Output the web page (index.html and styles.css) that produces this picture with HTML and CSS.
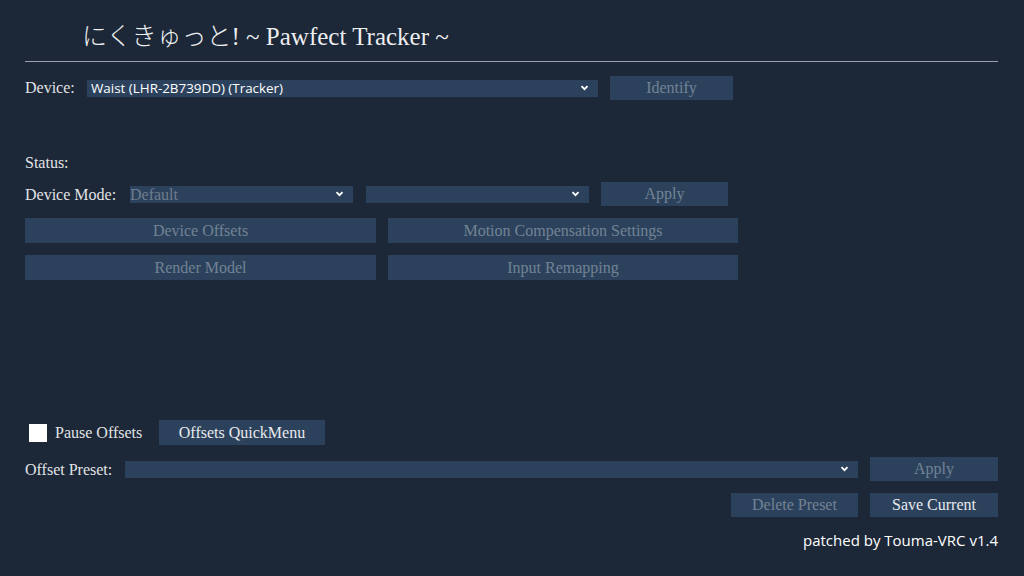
FILE: index.html
```html
<!DOCTYPE html>
<html lang="ja">
<head>
<meta charset="utf-8">
<title>Pawfect Tracker</title>
<link rel="stylesheet" href="styles.css">
</head>
<body>
<div class="app">
  <div class="title">にくきゅっと! ~ Pawfect Tracker ~</div>
  <div class="rule"></div>

  <div class="row device-row">
    <span class="label label-device">Device:</span>
    <div class="select sel-device">
      <span class="sel-text">Waist (LHR-2B739DD) (Tracker)</span>
      <svg class="chev" width="9" height="6" viewBox="0 0 9 6"><path d="M1.5 1.2 L4.5 4.2 L7.5 1.2" fill="none" stroke="#ffffff" stroke-width="1.8"/></svg>
    </div>
    <div class="btn disabled btn-identify">Identify</div>
  </div>

  <div class="label status">Status:</div>

  <div class="row mode-row">
    <span class="label label-mode">Device Mode:</span>
    <div class="select sel-mode">
      <span class="sel-placeholder">Default</span>
      <svg class="chev" width="9" height="6" viewBox="0 0 9 6"><path d="M1.5 1.2 L4.5 4.2 L7.5 1.2" fill="none" stroke="#ffffff" stroke-width="1.8"/></svg>
    </div>
    <div class="select sel-mode2">
      <span class="sel-placeholder"></span>
      <svg class="chev" width="9" height="6" viewBox="0 0 9 6"><path d="M1.5 1.2 L4.5 4.2 L7.5 1.2" fill="none" stroke="#ffffff" stroke-width="1.8"/></svg>
    </div>
    <div class="btn disabled btn-apply-mode">Apply</div>
  </div>

  <div class="grid">
    <div class="btn disabled">Device Offsets</div>
    <div class="btn disabled">Motion Compensation Settings</div>
    <div class="btn disabled">Render Model</div>
    <div class="btn disabled">Input Remapping</div>
  </div>

  <div class="row pause-row">
    <span class="checkbox"></span>
    <span class="label label-pause">Pause Offsets</span>
    <div class="btn btn-quick">Offsets QuickMenu</div>
  </div>

  <div class="row preset-row">
    <span class="label label-preset">Offset Preset:</span>
    <div class="select sel-preset">
      <span class="sel-placeholder"></span>
      <svg class="chev" width="9" height="6" viewBox="0 0 9 6"><path d="M1.5 1.2 L4.5 4.2 L7.5 1.2" fill="none" stroke="#ffffff" stroke-width="1.8"/></svg>
    </div>
    <div class="btn disabled btn-apply-preset">Apply</div>
  </div>

  <div class="row actions-row">
    <div class="btn disabled btn-delete">Delete Preset</div>
    <div class="btn btn-save">Save Current</div>
  </div>

  <div class="footer">patched by Touma-VRC v1.4</div>
</div>
</body>
</html>
```

FILE: styles.css
```css
html, body {
  margin: 0;
  padding: 0;
}
body {
  width: 1024px;
  height: 576px;
  overflow: hidden;
  background: #1c2737;
  color: #e4e6e9;
  font-family: "Liberation Serif", "Noto Sans CJK JP", serif;
  font-size: 16px;
}
.app {
  width: 973px;
  padding-left: 25px;
}
.title {
  box-sizing: border-box;
  height: 61px;
  padding-top: 6px;
  padding-left: 57px;
  display: flex;
  align-items: center;
  font-size: 25px;
  font-weight: 300;
  color: #eceef0;
}
.rule {
  height: 1px;
  background: #9aa1a9;
}
.row {
  display: flex;
  align-items: center;
}
.label {
  color: #e1e3e6;
  font-size: 16px;
  line-height: 20px;
  white-space: nowrap;
}
.select {
  height: 17px;
  background: #2c425c;
  display: flex;
  align-items: center;
  box-sizing: border-box;
  padding: 0 9px 0 4px;
}
.sel-text {
  flex: 1;
  font-family: "Open Sans", "Liberation Sans", sans-serif;
  font-size: 13.4px;
  color: #ffffff;
  white-space: nowrap;
}
.sel-placeholder {
  flex: 1;
  font-size: 16px;
  color: #6f7d8d;
  line-height: 17px;
  white-space: nowrap;
}
.chev {
  flex: none;
  display: block;
}
.btn {
  box-sizing: border-box;
  height: 25px;
  background: #2c425c;
  display: flex;
  align-items: center;
  justify-content: center;
  font-size: 16px;
  color: #e8eaed;
  white-space: nowrap;
}
.btn.disabled {
  color: #728295;
}

/* device row */
.device-row {
  margin-top: 14px;
  height: 24px;
}
.label-device { width: 62px; }
.sel-device { width: 511px; }
.btn-identify { width: 123px; height: 24px; margin-left: 12px; }

/* status */
.status {
  margin-top: 53px;
  height: 20px;
}

/* mode row */
.mode-row {
  margin-top: 9px;
  height: 24px;
}
.label-mode { width: 105px; padding-top: 1px; }
.sel-mode { width: 223px; padding-left: 0; }
.sel-mode2 { width: 223px; margin-left: 13px; }
.btn-apply-mode { width: 127px; height: 24px; margin-left: 12px; }

/* grid of buttons */
.grid {
  margin-top: 12px;
  display: grid;
  grid-template-columns: 351px 350px;
  grid-auto-rows: 25px;
  column-gap: 12px;
  row-gap: 12px;
}

/* pause row */
.pause-row {
  margin-top: 140px;
  height: 25px;
}
.checkbox {
  width: 18px;
  height: 18px;
  background: #ffffff;
  margin-left: 4px;
}
.label-pause { margin-left: 8px; width: 104px; }
.btn-quick { width: 166px; }

/* preset row */
.preset-row {
  margin-top: 12px;
  height: 24px;
}
.label-preset { width: 100px; padding-top: 1px; }
.sel-preset { width: 733px; }
.btn-apply-preset { width: 128px; height: 24px; margin-left: 12px; }

/* actions row */
.actions-row {
  margin-top: 12px;
  justify-content: flex-end;
  gap: 12px;
  height: 24px;
}
.btn-delete { width: 127px; height: 24px; }
.btn-save { width: 128px; height: 24px; }

.footer {
  margin-top: 13px;
  text-align: right;
  font-family: "Open Sans", "Liberation Sans", sans-serif;
  font-size: 15px;
  line-height: 20px;
  color: #ffffff;
}
```
